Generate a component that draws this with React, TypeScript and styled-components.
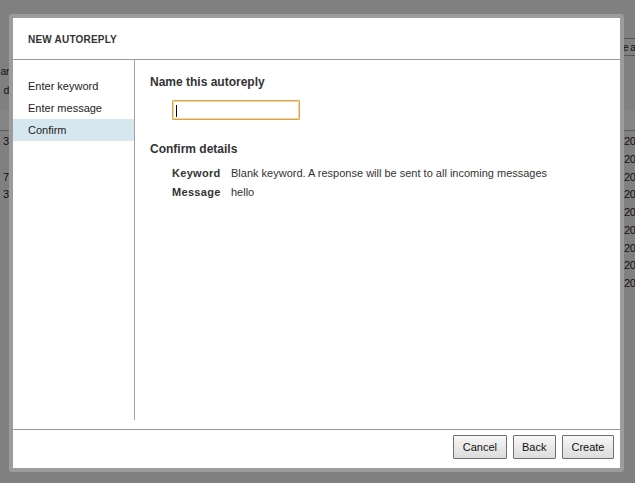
import React from "react";
import styled, { createGlobalStyle } from "styled-components";

const Global = createGlobalStyle`
  html, body { margin: 0; padding: 0; }
  body { font-family: "Liberation Sans", Arial, sans-serif; }
`;

const Screen = styled.div`
  position: relative;
  width: 635px;
  height: 483px;
  overflow: hidden;
  background: #808080;
  font-size: 11px;
  color: #111;
`;

/* ---------- page behind the modal (dimmed) ---------- */
const PageGrid = styled.div`
  display: grid;
  grid-template-columns: 9px 1fr 15px;
  grid-template-rows: 110px 21px auto;
`;

const SideCell = styled.div<{ $align?: "end" | "start" }>`
  display: flex;
  flex-direction: column;
  align-items: ${(p) => (p.$align === "end" ? "flex-end" : "flex-start")};
  white-space: nowrap;
`;

const TopLines = styled.div`
  padding-top: 62px;
  line-height: 19px;
  display: flex;
  flex-direction: column;
  align-items: flex-end;
  font-size: 10.5px;
  letter-spacing: -0.4px;
`;

const ToolbarBox = styled.div`
  margin-top: 38px;
  height: 18px;
  line-height: 18px;
  border-top: 1px solid #555;
  border-bottom: 1px solid #555;
  padding-left: 3px;
  width: 100%;
  box-sizing: border-box;
  font-size: 10px;
  letter-spacing: -0.5px;
`;

const Band = styled.div`
  grid-column: 1 / -1;
  background: #858585;
  border-bottom: 1px solid #5c5c5c;
`;

const RowCell = styled.div<{ $pad?: number }>`
  line-height: 17.75px;
  height: 17.75px;
  padding-left: ${(p) => p.$pad ?? 0}px;
  white-space: nowrap;
  display: flex;
  justify-content: ${(p) => (p.$pad ? "flex-start" : "flex-end")};
  letter-spacing: ${(p) => (p.$pad ? "-0.4px" : "0")};
`;

const Rows = styled.div`
  grid-column: 1 / -1;
  display: grid;
  grid-template-columns: 9px 1fr 15px;
  padding-top: 2px;
`;

/* ---------- modal ---------- */
const Frame = styled.div`
  position: absolute;
  left: 9px;
  top: 14px;
  width: 615px;
  height: 458px;
  box-sizing: border-box;
  padding: 4px;
  background: #9c9c9c;
  border-radius: 3px;
`;

const Panel = styled.div`
  height: 100%;
  background: #fff;
  display: flex;
  flex-direction: column;
  color: #333;
`;

const Header = styled.div`
  flex: none;
  display: flex;
  align-items: center;
  padding-left: 15px;
  padding-top: 1px;
  height: 40px;
  border-bottom: 1px solid #9a9a9a;
  font-size: 10px;
  font-weight: bold;
  letter-spacing: 0.2px;
  color: #333;
`;

const Body = styled.div`
  flex: 1;
  display: flex;
  margin-bottom: 9px;
  min-height: 0;
`;

const Nav = styled.div`
  width: 121px;
  flex: none;
  border-right: 1px solid #a0a0a0;
  padding-top: 15px;
  display: flex;
  flex-direction: column;
`;

const NavItem = styled.div<{ $active?: boolean }>`
  height: 22px;
  line-height: 22px;
  padding-left: 15px;
  font-size: 11px;
  color: #222;
  background: ${(p) => (p.$active ? "#d7e7ef" : "transparent")};
`;

const Content = styled.div`
  flex: 1;
  padding: 15px 0 0 15px;
  display: flex;
  flex-direction: column;
  align-items: flex-start;
`;

const SectionTitle = styled.div<{ $gap?: number }>`
  font-size: 12px;
  line-height: 14px;
  font-weight: bold;
  color: #333;
  margin-top: ${(p) => p.$gap ?? 0}px;
`;

const InputWrap = styled.div`
  position: relative;
  margin: 11px 0 0 22px;
  width: 128px;
  height: 20px;
`;

const NameInput = styled.input`
  width: 128px;
  height: 20px;
  box-sizing: border-box;
  border: 1px solid #dca447;
  box-shadow: inset 0 0 0 1px #f2d59c;
  border-radius: 1px;
  outline: none;
  padding: 0 4px;
  font: 11px "Liberation Sans", Arial, sans-serif;
  caret-color: transparent;
  background: #fff;
`;

const Caret = styled.span`
  position: absolute;
  left: 4px;
  top: 5px;
  width: 1px;
  height: 12px;
  background: #000;
`;

const Details = styled.div`
  margin-top: 8px;
  padding-left: 22px;
  display: grid;
  grid-template-columns: 59px auto;
  line-height: 19px;
  font-size: 11px;
`;

const Label = styled.div`
  font-weight: bold;
  letter-spacing: 0.3px;
  color: #333;
`;

const Value = styled.div`
  color: #333;
`;

const Footer = styled.div`
  flex: none;
  border-top: 1px solid #9a9a9a;
  padding: 5px 6px 9px;
  display: flex;
  justify-content: flex-end;
  gap: 6px;
`;

const Button = styled.button`
  height: 24px;
  padding: 0 8.5px;
  border: 1px solid #6f6f6f;
  border-radius: 1px;
  background: linear-gradient(#f7f7f7, #dcdcdc);
  font: 11px "Liberation Sans", Arial, sans-serif;
  color: #111;
  cursor: pointer;
`;

export default function App() {
  const rows = [
    ["3", "20"],
    ["", "20"],
    ["7", "20"],
    ["3", "20"],
    ["", "20"],
    ["", "20"],
    ["", "20"],
    ["", "20"],
    ["", "20"],
  ];
  return (
    <>
      <Global />
      <Screen>
        <PageGrid>
          <SideCell $align="end">
            <TopLines>
              <span>ar</span>
              <span>d</span>
            </TopLines>
          </SideCell>
          <div />
          <SideCell>
            <ToolbarBox>e a</ToolbarBox>
          </SideCell>
          <Band />
          <Rows>
            {rows.map(([l, r], i) => (
              <React.Fragment key={i}>
                <RowCell>{l}</RowCell>
                <div />
                <RowCell $pad={4}>{r}</RowCell>
              </React.Fragment>
            ))}
          </Rows>
        </PageGrid>

        <Frame>
          <Panel>
            <Header>NEW AUTOREPLY</Header>
            <Body>
              <Nav>
                <NavItem>Enter keyword</NavItem>
                <NavItem>Enter message</NavItem>
                <NavItem $active>Confirm</NavItem>
              </Nav>
              <Content>
                <SectionTitle>Name this autoreply</SectionTitle>
                <InputWrap>
                  <NameInput type="text" />
                  <Caret />
                </InputWrap>
                <SectionTitle $gap={22}>Confirm details</SectionTitle>
                <Details>
                  <Label>Keyword</Label>
                  <Value>Blank keyword. A response will be sent to all incoming messages</Value>
                  <Label>Message</Label>
                  <Value>hello</Value>
                </Details>
              </Content>
            </Body>
            <Footer>
              <Button>Cancel</Button>
              <Button>Back</Button>
              <Button>Create</Button>
            </Footer>
          </Panel>
        </Frame>
      </Screen>
    </>
  );
}
